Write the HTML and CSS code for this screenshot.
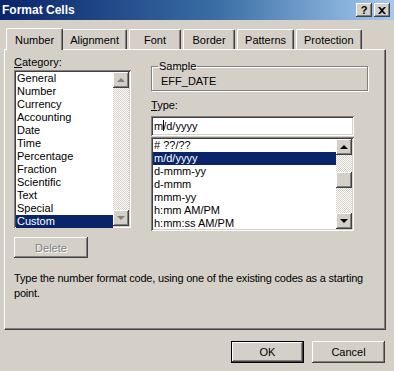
FILE: index.html
```html
<!DOCTYPE html>
<html lang="en">
<head>
    <meta charset="UTF-8">
    <title>Format Cells</title>
    <link rel="stylesheet" href="styles.css">
</head>
<body>

<div class="window">
    <div class="titlebar">
        <span class="title">Format Cells</span>
        <div class="caption-buttons">
            <span class="cap-btn">?</span>
            <span class="cap-btn">
                <svg width="8" height="7" viewBox="0 0 8 7"><path d="M0 0h2l2 2 2-2h2L5 3.5 8 7H6L4 5 2 7H0l3-3.5z" fill="#000"/></svg>
            </span>
        </div>
    </div>

    <div class="content">
        <div class="tabs">
            <div class="tab active">Number</div>
            <div class="tab">Alignment</div>
            <div class="tab">Font</div>
            <div class="tab">Border</div>
            <div class="tab">Patterns</div>
            <div class="tab">Protection</div>
        </div>

        <div class="panel">
            <div class="columns">
                <div class="left">
                    <div class="label"><u>C</u>ategory:</div>
                    <div class="listbox category">
                        <ul class="items">
                            <li>General</li>
                            <li>Number</li>
                            <li>Currency</li>
                            <li>Accounting</li>
                            <li>Date</li>
                            <li>Time</li>
                            <li>Percentage</li>
                            <li>Fraction</li>
                            <li>Scientific</li>
                            <li>Text</li>
                            <li>Special</li>
                            <li class="selected">Custom</li>
                        </ul>
                        <div class="scrollbar">
                            <span class="arrow up disabled"></span>
                            <span class="track"></span>
                            <span class="arrow down disabled"></span>
                        </div>
                    </div>
                    <button class="btn delete" disabled>Delete</button>
                </div>

                <div class="right">
                    <fieldset class="sample">
                        <legend>Sample</legend>
                        <div class="sample-value">EFF_DATE</div>
                    </fieldset>
                    <div class="label type-label"><u>T</u>ype:</div>
                    <div class="textbox">m<span class="caret"></span>/d/yyyy</div>
                    <div class="listbox types">
                        <ul class="items">
                            <li># ??/??</li>
                            <li class="selected">m/d/yyyy</li>
                            <li>d-mmm-yy</li>
                            <li>d-mmm</li>
                            <li>mmm-yy</li>
                            <li>h:mm AM/PM</li>
                            <li>h:mm:ss AM/PM</li>
                        </ul>
                        <div class="scrollbar">
                            <span class="arrow up"></span>
                            <span class="track with-thumb"><span class="thumb"></span></span>
                            <span class="arrow down"></span>
                        </div>
                    </div>
                </div>
            </div>

            <p class="hint">Type the number format code, using one of the existing codes as a starting point.</p>
        </div>

        <div class="actions">
            <button class="btn default">OK</button>
            <button class="btn">Cancel</button>
        </div>
    </div>
</div>

</body>
</html>
```

FILE: styles.css
```css
body {
    margin: 0;
    background-color: #d4d0c8;
    font-family: "Liberation Sans", Arial, sans-serif;
    font-size: 11px;
    color: #000;
}
.window {
    width: 394px;
    height: 371px;
    overflow: hidden;
}
.titlebar {
    height: 20px;
    display: flex;
    align-items: center;
    justify-content: space-between;
    padding: 0 4px 0 2px;
    background: linear-gradient(to right, #0a246a 0%, #3a6ea5 55%, #a6caf0 100%);
}
.title {
    color: #fff;
    font-weight: bold;
    font-size: 12px;
}
.caption-buttons {
    display: flex;
    gap: 2px;
}
.cap-btn {
    width: 16px;
    height: 14px;
    display: flex;
    align-items: center;
    justify-content: center;
    background-color: #d4d0c8;
    font-weight: bold;
    font-size: 11px;
    box-shadow: inset -1px -1px #404040, inset 1px 1px #fff, inset -2px -2px #808080;
}
.content {
    padding: 7px 8px 0 4px;
}
.tabs {
    display: flex;
    height: 22px;
    align-items: flex-end;
    padding-left: 2px;
}
.tab {
    height: 19px;
    min-width: 36px;
    padding: 0 7px;
    display: flex;
    align-items: center;
    justify-content: center;
    border-top: 1px solid #fff;
    border-left: 1px solid #fff;
    border-right: 1px solid #404040;
    border-radius: 2px 2px 0 0;
    box-shadow: inset -1px 0 #808080;
    margin-right: 2px;
}
.tab.active {
    height: 21px;
    margin: 0 -1px -1px 0;
    padding: 0 8px;
    position: relative;
    z-index: 1;
    background-color: #d4d0c8;
}
.panel {
    height: 281px;
    border-top: 1px solid #fff;
    border-left: 1px solid #fff;
    border-right: 1px solid #404040;
    border-bottom: 1px solid #404040;
    box-shadow: inset -1px -1px #808080;
    padding: 6px 0 0 9px;
    box-sizing: border-box;
}
.columns {
    display: flex;
    gap: 20px;
}
.left {
    width: 117px;
}
.right {
    width: 203px;
}
.label {
    height: 14px;
}
.listbox {
    display: flex;
    background-color: #fff;
    padding: 2px;
    box-shadow: inset 1px 1px #808080, inset -1px -1px #fff, inset 2px 2px #404040, inset -2px -2px #d4d0c8;
}
.category {
    height: 158px;
    box-sizing: border-box;
}
.items {
    list-style: none;
    margin: 0;
    padding: 0;
    flex: 1;
}
.items li {
    height: 13px;
    line-height: 13px;
    padding-left: 1px;
    white-space: nowrap;
}
.items li.selected {
    background-color: #0a246a;
    color: #fff;
}
.scrollbar {
    width: 16px;
    display: flex;
    flex-direction: column;
}
.arrow {
    height: 16px;
    flex: none;
    background-color: #d4d0c8;
    box-shadow: inset -1px -1px #404040, inset 1px 1px #fff, inset -2px -2px #808080;
    position: relative;
}
.arrow::after {
    content: "";
    position: absolute;
    left: 4px;
    width: 0;
    height: 0;
    border-left: 4px solid transparent;
    border-right: 4px solid transparent;
}
.arrow.up::after {
    top: 6px;
    border-bottom: 4px solid #000;
}
.arrow.down::after {
    top: 6px;
    border-top: 4px solid #000;
}
.arrow.disabled::after {
    border-bottom-color: #808080;
    border-top-color: #808080;
}
.arrow.up.disabled::after {
    border-top-color: transparent;
}
.arrow.down.disabled::after {
    border-bottom-color: transparent;
}
.track {
    flex: 1;
    background: repeating-conic-gradient(#d4d0c8 0 25%, #fff 0 50%) 0 0 / 2px 2px;
}
.with-thumb {
    display: flex;
    flex-direction: column;
    justify-content: flex-end;
    padding-bottom: 25px;
}
.thumb {
    height: 16px;
    background-color: #d4d0c8;
    box-shadow: inset -1px -1px #404040, inset 1px 1px #fff, inset -2px -2px #808080;
}
.btn {
    font-family: "Liberation Sans", Arial, sans-serif;
    font-size: 11px;
    background-color: #d4d0c8;
    border: none;
    padding: 0;
    color: #000;
    box-shadow: inset -1px -1px #404040, inset 1px 1px #fff, inset -2px -2px #808080;
}
.btn.delete {
    width: 74px;
    height: 21px;
    margin-top: 9px;
    color: #808080;
    text-shadow: 1px 1px #fff;
}
.sample {
    margin: 0;
    padding: 3px 8px 6px;
    height: 31px;
    box-sizing: border-box;
    border: 1px solid #808080;
    box-shadow: inset 1px 1px #fff, 1px 1px #fff;
    width: 217px;
    margin-top: 4px;
}
.sample legend {
    padding: 0 1px;
    margin-left: -2px;
}
.sample-value {
    padding-left: 1px;
}
.type-label {
    margin-top: 8px;
    margin-bottom: 3px;
}
.textbox {
    height: 20px;
    line-height: 20px;
    box-sizing: border-box;
    padding-left: 3px;
    background-color: #fff;
    box-shadow: inset 1px 1px #808080, inset -1px -1px #fff, inset 2px 2px #404040, inset -2px -2px #d4d0c8;
}
.caret {
    display: inline-block;
    width: 1px;
    height: 11px;
    margin: 0 -1px 0 0;
    background-color: #000;
    vertical-align: -1px;
}
.types {
    margin-top: 1px;
    height: 94px;
    box-sizing: border-box;
}
.hint {
    margin: 13px 0 0;
    line-height: 15px;
    letter-spacing: -0.2px;
    padding-right: 0;
}
.actions {
    display: flex;
    justify-content: flex-end;
    gap: 8px;
    margin-top: 11px;
    padding-right: 1px;
}
.actions .btn {
    width: 73px;
    height: 22px;
}
.btn.default {
    box-shadow: inset 1px 1px #000, inset -1px -1px #000, inset -2px -2px #404040, inset 2px 2px #fff, inset -3px -3px #808080;
}
```
